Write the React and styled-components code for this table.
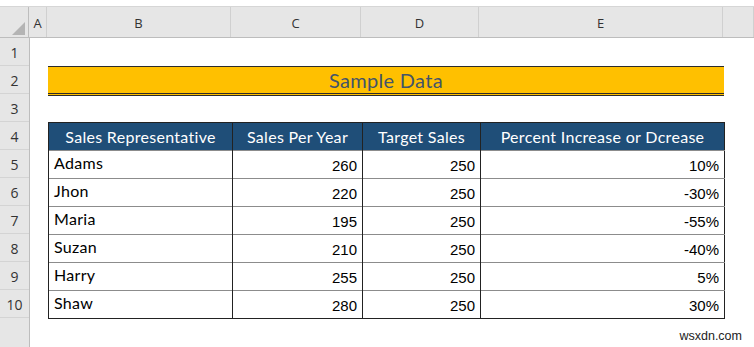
import React from 'react'
import styled, { createGlobalStyle } from 'styled-components'

const GlobalStyle = createGlobalStyle`
    html, body, #root {
        margin: 0;
        height: 100%;
    }
    body {
        background: #fff;
        font-family: "Liberation Sans", Arial, sans-serif;
        overflow: hidden;
    }
`

const Page = styled.div`
    position: relative;
    display: flex;
    flex-direction: column;
    height: 100vh;
`
const TopStrip = styled.div`
    height: 6px;
    background: #fff;
    border-bottom: 1px solid #d6d6d6;
`
const ColumnBar = styled.div`
    display: flex;
    height: 30px;
    background: #e6e6e6;
    border-bottom: 1px solid #bdbdbd;
`
const Corner = styled.div`
    width: 29px;
    border-right: 1px solid #bdbdbd;
    display: flex;
    align-items: flex-end;
    justify-content: flex-end;
    padding: 0 3px 2px 0;
    box-sizing: border-box;
`
const ColHead = styled.div`
    width: ${p => p.$w}px;
    flex: ${p => (p.$grow ? 1 : 'none')};
    box-sizing: border-box;
    border-right: 1px solid #d0d0d0;
    display: flex;
    align-items: center;
    justify-content: center;
    font-family: "Open Sans", sans-serif;
    font-size: 13px;
    color: #333;
    padding-top: 2px;
`
const Body = styled.div`
    flex: 1;
    display: flex;
`
const RowHeaders = styled.div`
    width: 29px;
    background: #e6e6e6;
    border-right: 1px solid #bdbdbd;
    display: flex;
    flex-direction: column;
`
const RowNum = styled.div`
    height: 28px;
    box-sizing: border-box;
    border-bottom: 1px solid #d4d4d4;
    display: flex;
    align-items: flex-end;
    justify-content: center;
    padding-bottom: 3px;
    font-family: "Open Sans", sans-serif;
    font-size: 14px;
    color: #333;
`
const Sheet = styled.div`
    display: flex;
    flex-direction: column;
    padding-left: 18px;
`
const Spacer = styled.div`
    height: ${p => p.$h}px;
`
const TitleBand = styled.div`
    width: 676px;
    height: 30px;
    box-sizing: border-box;
    background: #ffc000;
    border-top: 1px solid #2b2b2b;
    border-bottom: 3px double #2b2b2b;
    display: flex;
    align-items: center;
    justify-content: center;
    font-family: "Comic Sans MS", Lato, sans-serif;
    font-size: 20px;
    letter-spacing: 0.3px;
    color: #44546a;
`
const Table = styled.table`
    width: 676px;
    border-collapse: collapse;
    table-layout: fixed;
    border: 1px solid #222;
`
const Row = styled.tr`
    height: 28px;
`
const Th = styled.th`
    background: #1f4e78;
    color: #fff;
    font-family: "Comic Sans MS", Lato, sans-serif;
    font-weight: 400;
    font-size: 16px;
    letter-spacing: 0.3px;
    border-left: 1px solid #222;
    padding: 0;
`
const Td = styled.td`
    padding: ${p => (p.$num ? '2px 5px 0 0' : '0 0 5px 5px')};
    text-align: ${p => (p.$num ? 'right' : 'left')};
    font-family: ${p => (p.$num ? '"Liberation Sans", Arial, sans-serif' : '"Comic Sans MS", Lato, sans-serif')};
    font-size: ${p => (p.$num ? 15 : 16)}px;
    letter-spacing: ${p => (p.$num ? 0 : 0.3)}px;
    color: #000;
    border-left: 1px solid #222;
    border-top: 1px solid #8c8c8c;
`
const Watermark = styled.div`
    position: absolute;
    right: 12px;
    bottom: 4px;
    font-size: 12.5px;
    color: #222;
`

const columns = [
    { name: 'A', w: 18 },
    { name: 'B', w: 184 },
    { name: 'C', w: 130 },
    { name: 'D', w: 118 },
    { name: 'E', w: 244 },
]

const data = [
    { name: 'Adams', sales: 260, target: 250, pct: '10%' },
    { name: 'Jhon', sales: 220, target: 250, pct: '-30%' },
    { name: 'Maria', sales: 195, target: 250, pct: '-55%' },
    { name: 'Suzan', sales: 210, target: 250, pct: '-40%' },
    { name: 'Harry', sales: 255, target: 250, pct: '5%' },
    { name: 'Shaw', sales: 280, target: 250, pct: '30%' },
]

function App() {
    return (
        <>
            <GlobalStyle />
            <Page>
                <TopStrip />
                <ColumnBar>
                    <Corner>
                        <svg width="13" height="13" viewBox="0 0 13 13">
                            <polygon points="13,0 13,13 0,13" fill="#b4b4b4" />
                        </svg>
                    </Corner>
                    {columns.map(c => (
                        <ColHead key={c.name} $w={c.w}>{c.name}</ColHead>
                    ))}
                    <ColHead $grow />
                </ColumnBar>
                <Body>
                    <RowHeaders>
                        {Array.from({ length: 10 }, (_, i) => (
                            <RowNum key={i}>{i + 1}</RowNum>
                        ))}
                    </RowHeaders>
                    <Sheet>
                        <Spacer $h={28} />
                        <TitleBand>Sample Data</TitleBand>
                        <Spacer $h={26} />
                        <Table>
                            <colgroup>
                                <col style={{ width: 184 }} />
                                <col style={{ width: 130 }} />
                                <col style={{ width: 118 }} />
                                <col style={{ width: 244 }} />
                            </colgroup>
                            <thead>
                                <Row>
                                    <Th>Sales Representative</Th>
                                    <Th>Sales Per Year</Th>
                                    <Th>Target Sales</Th>
                                    <Th>Percent Increase or Dcrease</Th>
                                </Row>
                            </thead>
                            <tbody>
                                {data.map(item => (
                                    <Row key={item.name}>
                                        <Td>{item.name}</Td>
                                        <Td $num>{item.sales}</Td>
                                        <Td $num>{item.target}</Td>
                                        <Td $num>{item.pct}</Td>
                                    </Row>
                                ))}
                            </tbody>
                        </Table>
                    </Sheet>
                </Body>
                <Watermark>wsxdn.com</Watermark>
            </Page>
        </>
    )
}

export default App
